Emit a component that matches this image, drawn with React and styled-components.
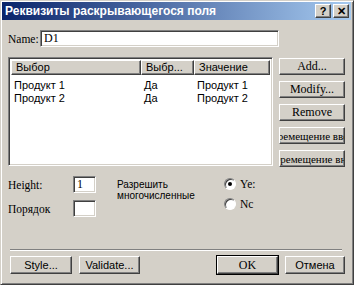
import React from "react";
import styled, { createGlobalStyle } from "styled-components";

const GlobalStyle = createGlobalStyle`
  html, body {
    margin: 0;
    padding: 0;
    background: #d4d0c8;
  }
  * {
    box-sizing: border-box;
  }
`;

const sans = `"Liberation Sans", Arial, sans-serif`;
const serif = `"Liberation Serif", "Times New Roman", serif`;

// Window frame
const Window = styled.div`
  width: 354px;
  height: 285px;
  background: #d4d0c8;
  border-top: 1px solid #d4d0c8;
  border-left: 1px solid #d4d0c8;
  border-right: 1px solid #404040;
  border-bottom: 1px solid #404040;
  box-shadow: inset 1px 1px 0 #fff, inset -1px -1px 0 #808080;
  padding: 1px 2px 2px 1px;
  display: flex;
  flex-direction: column;
  font-family: ${sans};
  font-size: 11px;
  color: #000;
  overflow: hidden;
`;

const TitleBar = styled.div`
  height: 18px;
  display: flex;
  align-items: center;
  justify-content: space-between;
  padding: 0 2px 0 3px;
  background: linear-gradient(to right, #0a246a, #a6caf0);
`;

const Title = styled.span`
  color: #fff;
  font-family: ${sans};
  font-weight: bold;
  font-size: 12px;
  white-space: nowrap;
`;

const TitleButtons = styled.div`
  display: flex;
  gap: 2px;
`;

const CaptionButton = styled.div`
  width: 16px;
  height: 14px;
  background: #d4d0c8;
  border-top: 1px solid #fff;
  border-left: 1px solid #fff;
  border-right: 1px solid #404040;
  border-bottom: 1px solid #404040;
  box-shadow: inset -1px -1px 0 #808080;
  display: flex;
  align-items: center;
  justify-content: center;
  font-weight: bold;
  font-size: 11px;
  line-height: 1;
`;

const Body = styled.div`
  flex: 1;
  display: flex;
  flex-direction: column;
  padding: 10px 6px 0 6px;
`;

const NameRow = styled.div`
  display: flex;
  align-items: center;
`;

const SerifLabel = styled.span`
  font-family: ${serif};
  font-size: 11.5px;
  width: ${(p) => p.$w || "auto"};
`;

const Field = styled.div`
  width: ${(p) => p.$w}px;
  height: 17px;
  background: #fff;
  border-top: 1px solid #808080;
  border-left: 1px solid #808080;
  border-right: 1px solid #fff;
  border-bottom: 1px solid #fff;
  box-shadow: inset 1px 1px 0 #404040, inset -1px -1px 0 #d4d0c8;
  padding: 1px 3px;
  font-family: ${serif};
  font-size: 12px;
  line-height: 13px;
`;

const MainRow = styled.div`
  display: flex;
  gap: 6px;
  margin-top: 10px;
`;

const ListView = styled.div`
  width: 269px;
  height: 109px;
  background: #fff;
  border-top: 1px solid #808080;
  border-left: 1px solid #808080;
  border-right: 1px solid #fff;
  border-bottom: 1px solid #fff;
  box-shadow: inset 1px 1px 0 #404040, inset -1px -1px 0 #d4d0c8;
  padding: 2px;
`;

const Header = styled.div`
  display: grid;
  grid-template-columns: 130px 53px 1fr;
  height: 15px;
`;

const HeaderCell = styled.div`
  background: #d4d0c8;
  border-top: 1px solid #fff;
  border-left: 1px solid #fff;
  border-right: 1px solid #404040;
  border-bottom: 1px solid #404040;
  box-shadow: inset -1px -1px 0 #808080;
  padding: 0 4px;
  line-height: 12px;
  white-space: nowrap;
  overflow: hidden;
`;

const Rows = styled.div`
  padding-top: 4px;
`;

const Row = styled.div`
  display: grid;
  grid-template-columns: 130px 53px 1fr;
  height: 13px;
  line-height: 13px;
`;

const Cell = styled.div`
  padding-left: 3px;
  white-space: nowrap;
`;

const SideButtons = styled.div`
  display: flex;
  flex-direction: column;
  gap: 6px;
  padding-top: 1px;
`;

const Button = styled.div`
  width: ${(p) => p.$w || 66}px;
  height: ${(p) => p.$h || 17}px;
  background: #d4d0c8;
  border-top: 1px solid #fff;
  border-left: 1px solid #fff;
  border-right: 1px solid #404040;
  border-bottom: 1px solid #404040;
  box-shadow: inset -1px -1px 0 #808080;
  display: flex;
  align-items: center;
  justify-content: center;
  font-family: ${(p) => (p.$serif ? serif : sans)};
  font-size: ${(p) => (p.$serif ? "12px" : "11px")};
  white-space: nowrap;
  overflow: hidden;
  outline: ${(p) => (p.$default ? "1px solid #000" : "none")};
`;

// long caption that the narrow button cuts on both sides
const Overflow = styled.span`
  flex-shrink: 0;
  font-family: ${serif};
  font-size: 11px;
`;

const OptionsRow = styled.div`
  display: flex;
  margin-top: 9px;
`;

const FieldColumn = styled.div`
  display: flex;
  flex-direction: column;
  gap: 7px;
  width: 109px;
`;

const FieldRow = styled.div`
  display: flex;
  align-items: center;
`;

const MultiLabel = styled.div`
  font-family: ${sans};
  font-size: 10px;
  line-height: 11px;
  width: 107px;
  padding-top: 3px;
`;

const RadioColumn = styled.div`
  display: flex;
  flex-direction: column;
  gap: 8px;
  padding-top: 2px;
`;

const RadioRow = styled.div`
  display: flex;
  align-items: center;
  gap: 4px;
`;

const RadioCircle = styled.span`
  width: 12px;
  height: 12px;
  border-radius: 50%;
  background: #fff;
  border: 1px solid;
  border-color: #808080 #fff #fff #808080;
  box-shadow: inset 1px 1px 0 #404040;
  display: flex;
  align-items: center;
  justify-content: center;
  &::after {
    content: "";
    width: 4px;
    height: 4px;
    border-radius: 50%;
    background: ${(p) => (p.$checked ? "#000" : "transparent")};
  }
`;

const Spacer = styled.div`
  flex: 1;
`;

const Separator = styled.div`
  width: 332px;
  margin-left: 2px;
  border-top: 1px solid #808080;
  border-bottom: 1px solid #fff;
`;

const Footer = styled.div`
  display: flex;
  align-items: center;
  margin: 5px 0 8px 2px;
  gap: 7px;
`;

export default function App() {
  return (
    <>
      <GlobalStyle />
      <Window>
        <TitleBar>
          <Title>Реквизиты раскрывающегося поля</Title>
          <TitleButtons>
            <CaptionButton>?</CaptionButton>
            <CaptionButton>✕</CaptionButton>
          </TitleButtons>
        </TitleBar>
        <Body>
          <NameRow>
            <SerifLabel $w="32px">Name:</SerifLabel>
            <Field $w={239}>D1</Field>
          </NameRow>

          <MainRow>
            <ListView>
              <Header>
                <HeaderCell>Выбор</HeaderCell>
                <HeaderCell>Выбр...</HeaderCell>
                <HeaderCell>Значение</HeaderCell>
              </Header>
              <Rows>
                <Row>
                  <Cell>Продукт 1</Cell>
                  <Cell>Да</Cell>
                  <Cell>Продукт 1</Cell>
                </Row>
                <Row>
                  <Cell>Продукт 2</Cell>
                  <Cell>Да</Cell>
                  <Cell>Продукт 2</Cell>
                </Row>
              </Rows>
            </ListView>
            <SideButtons>
              <Button $serif>Add...</Button>
              <Button $serif>Modify...</Button>
              <Button $serif>Remove</Button>
              <Button>
                <Overflow>Перемещение вверх</Overflow>
              </Button>
              <Button>
                <Overflow>Перемещение вниз</Overflow>
              </Button>
            </SideButtons>
          </MainRow>

          <OptionsRow>
            <FieldColumn>
              <FieldRow>
                <SerifLabel $w="65px">Height:</SerifLabel>
                <Field $w={23}>1</Field>
              </FieldRow>
              <FieldRow>
                <SerifLabel $w="65px">Порядок</SerifLabel>
                <Field $w={23} />
              </FieldRow>
            </FieldColumn>
            <MultiLabel>
              Разрешить
              <br />
              многочисленные
            </MultiLabel>
            <RadioColumn>
              <RadioRow>
                <RadioCircle $checked />
                <SerifLabel>Ye:</SerifLabel>
              </RadioRow>
              <RadioRow>
                <RadioCircle />
                <SerifLabel>Nc</SerifLabel>
              </RadioRow>
            </RadioColumn>
          </OptionsRow>

          <Spacer />
          <Separator />
          <Footer>
            <Button $w={62} $h={18}>Style...</Button>
            <Button $w={61} $h={18}>Validate...</Button>
            <Spacer />
            <Button $w={61} $h={18} $serif $default>OK</Button>
            <Button $w={60} $h={18}>Отмена</Button>
          </Footer>
        </Body>
      </Window>
    </>
  );
}
